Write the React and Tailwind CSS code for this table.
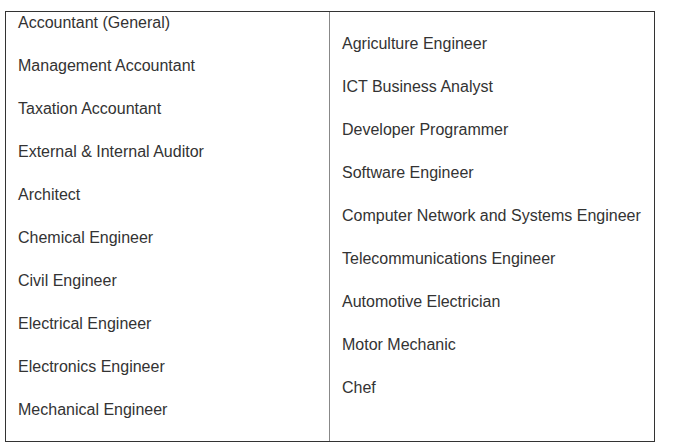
const left = [
  'Accountant (General)',
  'Management Accountant',
  'Taxation Accountant',
  'External & Internal Auditor',
  'Architect',
  'Chemical Engineer',
  'Civil Engineer',
  'Electrical Engineer',
  'Electronics Engineer',
  'Mechanical Engineer',
];

const right = [
  'Agriculture Engineer',
  'ICT Business Analyst',
  'Developer Programmer',
  'Software Engineer',
  'Computer Network and Systems Engineer',
  'Telecommunications Engineer',
  'Automotive Electrician',
  'Motor Mechanic',
  'Chef',
];

const Item = ({ label }) => (
  <div className="h-[43px] shrink-0 leading-[18px] whitespace-nowrap">{label}</div>
);

export default function App() {
  return (
    <div
      className="w-[687px] h-[447px] overflow-hidden bg-white pt-[11px] pl-[5px] text-[16px] text-[#333]"
      style={{ fontFamily: '"Liberation Sans", Arial, sans-serif' }}
    >
      <div className="flex w-[650px] h-[431px] border border-[#333]">
        <div className="flex w-[324px] flex-col overflow-hidden border-r border-[#888] pl-[12px] pt-[2px]">
          {left.map((l) => (
            <Item key={l} label={l} />
          ))}
        </div>
        <div className="flex flex-1 flex-col justify-center pl-[12px] pt-[4px]">
          {right.map((l) => (
            <Item key={l} label={l} />
          ))}
        </div>
      </div>
    </div>
  );
}
